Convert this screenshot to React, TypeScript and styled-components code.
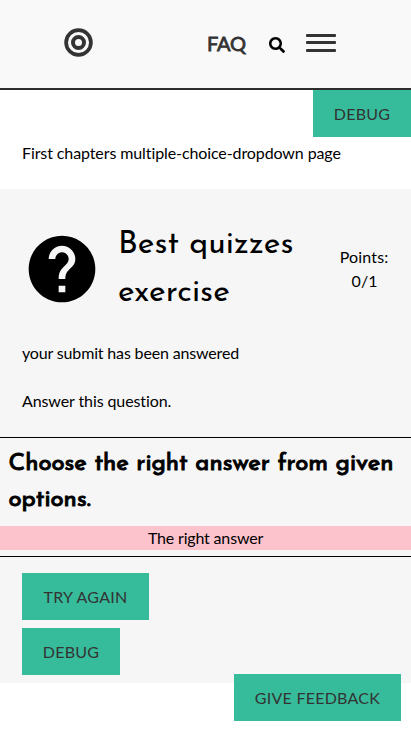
import React from 'react';
import styled, { createGlobalStyle } from 'styled-components';

const Global = createGlobalStyle`
  *, *::before, *::after { box-sizing: border-box; }
  html, body { margin: 0; background: #fff; }
  body {
    font: 16px/24px Lato, sans-serif;
    font-variant-ligatures: none;
    color: #000;
    overflow: hidden;
  }
`;

const Page = styled.div`
  height: 731px;
  position: relative;
  overflow: hidden;
`;

const Header = styled.header`
  height: 90px;
  background: #f9f9f9;
  border-bottom: 2px solid #2d2d2d;
  display: flex;
  align-items: flex-start;
  padding: 28px 75px 0 64px;
`;

const Logo = styled.svg`
  width: 29px;
  height: 29px;
  display: block;
`;

const Faq = styled.a`
  margin-left: 114px;
  margin-top: 3px;
  width: 39px;
  font-size: 20px;
  font-weight: 400;
  letter-spacing: -0.2px;
  -webkit-text-stroke: 0.8px #333;
  color: #333;
`;

const SearchIcon = styled.svg`
  width: 16px;
  height: 16px;
  margin: 9px 21px 0 23px;
`;

const Burger = styled.div`
  width: 30px;
  margin-top: 6px;
`;

const Bar = styled.span<{ $gap: number }>`
  display: block;
  height: 3px;
  margin-bottom: ${(p) => p.$gap}px;
  border-radius: 1px;
  background: #333;
`;

const DebugRow = styled.div`
  display: flex;
  justify-content: flex-end;
  height: 47px;
`;

const Button = styled.button<{ $width: number }>`
  width: ${(p) => p.$width}px;
  height: 47px;
  border: 0;
  padding: 0;
  background: #37bc9b;
  color: #333;
  font: 16px/24px Lato, sans-serif;
  letter-spacing: 0.25px;
  white-space: nowrap;
`;

const Crumb = styled.p`
  margin: 4px 22px 24px;
  letter-spacing: -0.1px;
`;

const Exercise = styled.main`
  background: #f6f6f6;
  height: 494px;
`;

const TitleRow = styled.div`
  display: flex;
  align-items: center;
  height: 152px;
  padding: 8px 22px 0;
`;

const QuestionIcon = styled.svg`
  width: 80px;
  height: 80px;
  flex: none;
`;

const Title = styled.h1`
  margin: 0 0 0 16px;
  width: 222px;
  font: 400 32px/48px "Josefin Sans", Lato, sans-serif;
  letter-spacing: 0.05px;
`;

const Points = styled.div`
  width: 50px;
  text-align: center;
  letter-spacing: 0.18px;
`;

const Score = styled.div`
  padding-left: 1px;
`;

const Text = styled.p<{ $spacing: number }>`
  margin: 0 22px 24px;
  letter-spacing: ${(p) => p.$spacing}px;
`;

const Question = styled.section`
  border-top: 1px solid #000;
  border-bottom: 1px solid #000;
  height: 120px;
`;

const Prompt = styled.h2`
  margin: 8px 8px 8px 8.5px;
  font: 400 24px/36px "Josefin Sans", Lato, sans-serif;
  -webkit-text-stroke: 1px #000;
`;

const Answer = styled.div`
  height: 24px;
  background: #fcc3cd;
  text-align: center;
  letter-spacing: -0.17px;
`;

const Actions = styled.div`
  display: flex;
  flex-direction: column;
  align-items: flex-start;
  gap: 8px;
  padding: 16px 22px;
`;

const Feedback = styled.div`
  position: absolute;
  right: 10px;
  bottom: 10px;
`;

export default function App() {
  return (
    <Page>
      <Global />
      <Header>
        <Logo viewBox="0 0 29 29" fill="none" stroke="#333">
          <circle cx="14.5" cy="14.5" r="12.4" strokeWidth="3.7" />
          <circle cx="14.5" cy="14.5" r="5.5" strokeWidth="4" />
        </Logo>
        <Faq>FAQ</Faq>
        <SearchIcon viewBox="0 0 512 512">
          <path d="M505 442.7L405.3 343c-4.5-4.5-10.6-7-17-7H372c27.6-35.3 44-79.7 44-128C416 93.1 322.9 0 208 0S0 93.1 0 208s93.1 208 208 208c48.3 0 92.7-16.4 128-44v16.3c0 6.4 2.5 12.5 7 17l99.7 99.7c9.4 9.4 24.6 9.4 33.9 0l28.3-28.3c9.4-9.4 9.4-24.6.1-34zM208 336c-70.7 0-128-57.2-128-128 0-70.7 57.2-128 128-128 70.7 0 128 57.2 128 128 0 70.7-57.2 128-128 128z" />
        </SearchIcon>
        <Burger><Bar $gap={4} /><Bar $gap={5} /><Bar $gap={0} /></Burger>
      </Header>
      <DebugRow><Button $width={98}>DEBUG</Button></DebugRow>
      <Crumb>First chapters multiple-choice-dropdown page</Crumb>
      <Exercise>
        <TitleRow>
          <QuestionIcon viewBox="0 0 24 24">
            <path d="M12 2C6.48 2 2 6.48 2 12s4.48 10 10 10 10-4.48 10-10S17.52 2 12 2zm1 17h-2v-2h2v2zm2.07-7.75l-.9.92C13.45 12.9 13 13.5 13 15h-2v-.5c0-1.1.45-2.1 1.17-2.83l1.24-1.26c.37-.36.59-.86.59-1.41 0-1.1-.9-2-2-2s-2 .9-2 2H8c0-2.21 1.79-4 4-4s4 1.79 4 4c0 .88-.36 1.68-.93 2.25z" />
          </QuestionIcon>
          <Title>Best quizzes exercise</Title>
          <Points>Points:<Score>0/1</Score></Points>
        </TitleRow>
        <Text $spacing={-0.16}>your submit has been answered</Text>
        <Text $spacing={-0.1}>Answer this question.</Text>
        <Question>
          <Prompt>Choose the right answer from given options.</Prompt>
          <Answer>The right answer</Answer>
        </Question>
        <Actions>
          <Button $width={127}>TRY AGAIN</Button>
          <Button $width={98}>DEBUG</Button>
        </Actions>
      </Exercise>
      <Feedback><Button $width={167}>GIVE FEEDBACK</Button></Feedback>
    </Page>
  );
}
